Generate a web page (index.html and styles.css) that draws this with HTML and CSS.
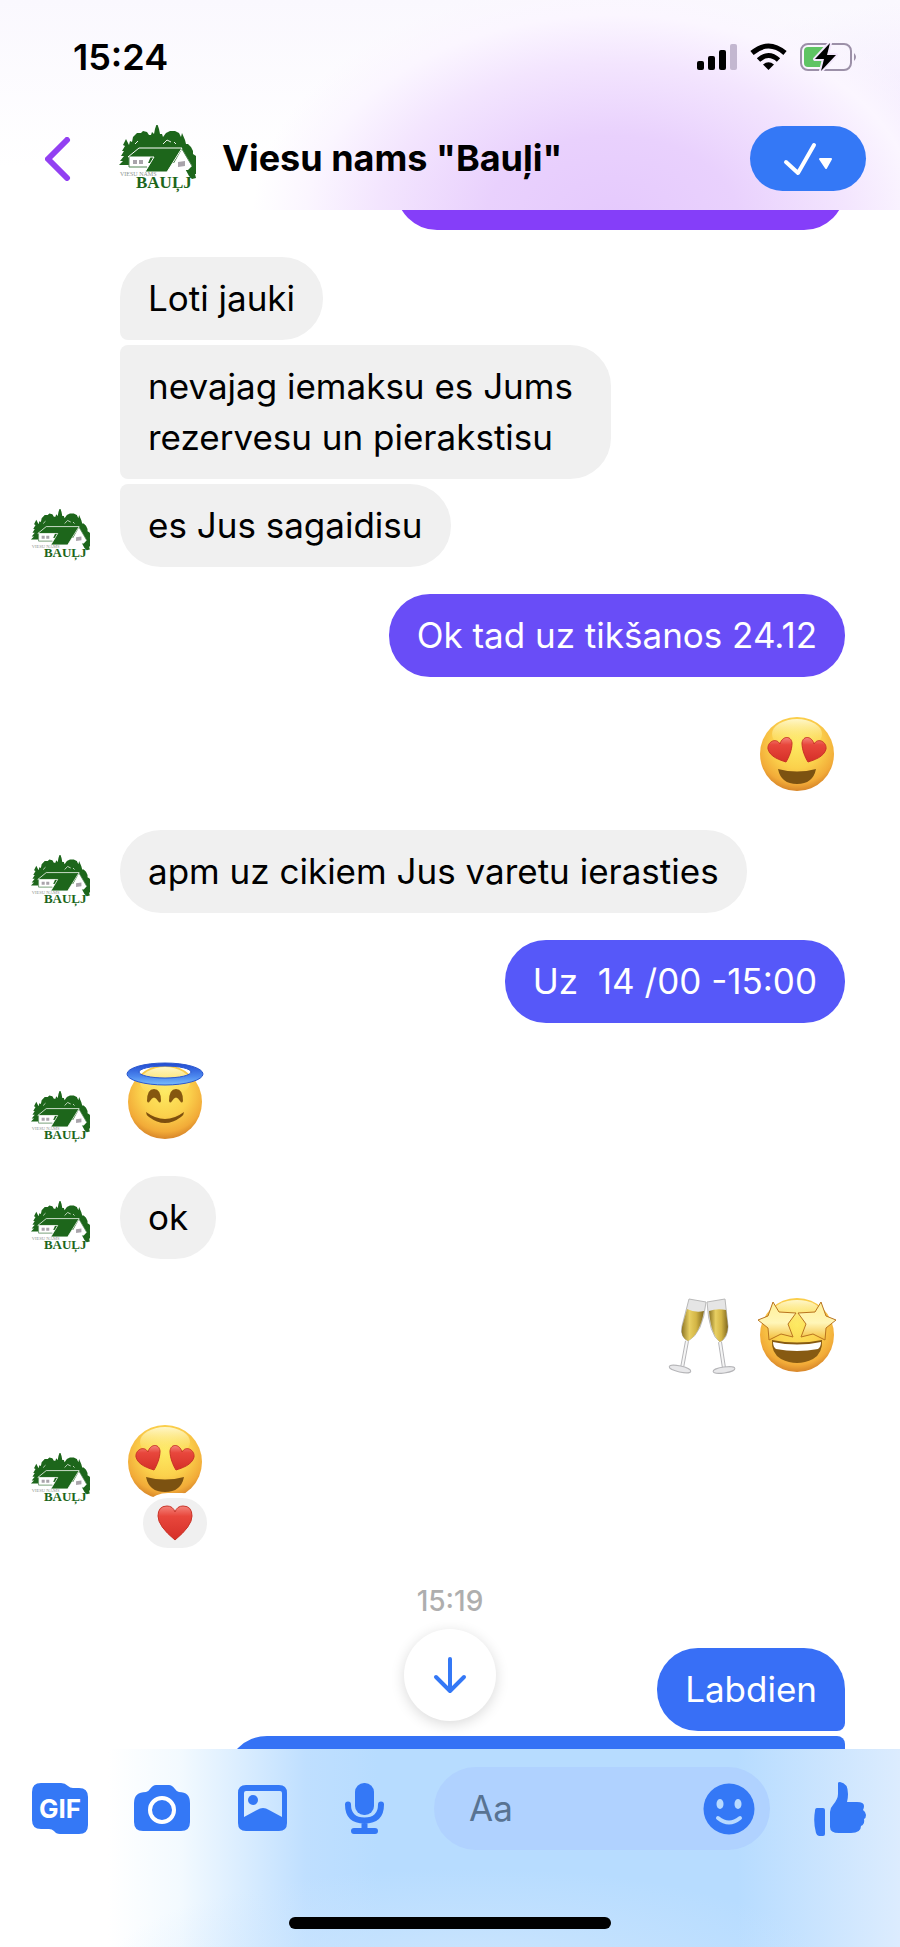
FILE: index.html
```html
<!DOCTYPE html>
<html lang="lv">
<head>
  <meta charset="UTF-8" />
  <meta name="viewport" content="width=device-width, initial-scale=1.0"/>
  <title>Viesu nams "Bauļi"</title>
  <link rel="stylesheet" href="styles.css">
</head>
<body>
  <!-- shared drawings -->
  <svg class="defs" width="0" height="0" aria-hidden="true">
    <defs>
      <radialGradient id="face" cx="50%" cy="36%" r="66%">
        <stop offset="0" stop-color="#fdea62"/>
        <stop offset="0.5" stop-color="#fbd14c"/>
        <stop offset="0.82" stop-color="#f2ab38"/>
        <stop offset="1" stop-color="#d27e26"/>
      </radialGradient>
      <linearGradient id="shine" x1="0" y1="0" x2="0" y2="1">
        <stop offset="0" stop-color="#fffbd8" stop-opacity="0.9"/>
        <stop offset="1" stop-color="#fde95f" stop-opacity="0"/>
      </linearGradient>
      <linearGradient id="heart" x1="0" y1="0" x2="0" y2="1">
        <stop offset="0" stop-color="#f4847b"/>
        <stop offset="0.3" stop-color="#e8473c"/>
        <stop offset="1" stop-color="#d52f28"/>
      </linearGradient>
      <linearGradient id="halo" x1="0" y1="0" x2="0" y2="1">
        <stop offset="0" stop-color="#2149d0"/>
        <stop offset="0.6" stop-color="#4b86ee"/>
        <stop offset="1" stop-color="#78bdfb"/>
      </linearGradient>
      <linearGradient id="star" x1="0" y1="0" x2="0" y2="1">
        <stop offset="0" stop-color="#fff09a"/>
        <stop offset="0.55" stop-color="#fff6b8"/>
        <stop offset="1" stop-color="#f3bd38"/>
      </linearGradient>
      <linearGradient id="wine" x1="0" y1="0" x2="1" y2="0">
        <stop offset="0" stop-color="#8d7524"/>
        <stop offset="0.35" stop-color="#e8cf62"/>
        <stop offset="0.65" stop-color="#d3b545"/>
        <stop offset="1" stop-color="#80681f"/>
      </linearGradient>
    </defs>

    <symbol id="logo" viewBox="0 0 78 68">
      <path fill="#1d661b" d="M1 40l4-4-3 0 4-5-3 0 3-5-2 0 3-5-2-1 3-6 3 6 1-4 2 1 1-5 4-4 4 0 2-2 4 1 2 3 2 0 1-3 2 2 1-5 2-6 2 6 1 5 2 0 1 3 3-4 4-2 5 0 4 2 2 4 1-4 3 7 1 4 2 0 3 3 2 4 0 3 3 2 1 4-1 3 2 4-2 3 2 4-3 0 1 4-4 1-3-3-7-13H23L11 32v8z"/>
      <path fill="none" stroke="#eef4ec" stroke-width="1" d="M17 19l3-3M45 19l4-4 4 2M56 17l2 2"/>
      <path fill="#fff" d="M11 31h22l-5 12H11z"/>
      <path fill="#1d661b" stroke="#fff" d="M21 23h43L49 47H27l9-15H10z"/>
      <path fill="#fff" d="M64 24l10 17-4 4H52z"/>
      <path fill="none" stroke="#4f8350" stroke-width="1" d="M11 32v10h18M64 24l10 17"/>
      <path fill="#a9a4ab" d="M15 35h4v4h-4zM21 35h4v4h-4zM60 37l7-1v5l-7 1z"/>
      <text class="logo-small" x="2" y="51">VIESU NAMS</text>
      <text class="logo-big" x="18" y="63">BAUĻJ</text>
    </symbol>

    <symbol id="love" viewBox="0 0 80 80">
      <g transform="translate(3 3)">
        <circle cx="37" cy="37" r="37" fill="url(#face)"/>
        <ellipse cx="37" cy="17" rx="25" ry="15" fill="url(#shine)"/>
        <path id="eye" fill="url(#heart)" stroke="#c93226" stroke-width="1" d="M26 45C20 43 10 40 8 32C7 25 16 20 20 27C22 19 31 18 32 26C32 33 29 40 26 45Z"/>
        <use href="#eye" transform="matrix(-1 0 0 1 74 0)"/>
        <path fill="#7c5211" d="M18 52q19 5 38 0q-3 15-19 15t-19-15z"/>
      </g>
    </symbol>

    <symbol id="angel" viewBox="0 0 80 80">
      <g transform="translate(2 3)">
        <circle cx="38" cy="39" r="37" fill="url(#face)"/>
        <ellipse cx="38" cy="19" rx="25" ry="15" fill="url(#shine)"/>
        <path fill="url(#halo)" stroke="#2a57cf" stroke-width="1" fill-rule="evenodd" d="M0 11a38 11 0 1 0 76 0a38 11 0 1 0-76 0zM12 9a26 6 0 1 0 52 0a26 6 0 1 0-52 0z"/>
        <path fill="#855710" d="M20 38q0-12 7-12t7 12q-1 3-3 0q-4-7-8 0q-2 3-3 0zM42 38q0-12 7-12t7 12q-1 3-3 0q-4-7-8 0q-2 3-3 0z"/>
        <path fill="#7d4f0e" d="M19 49q19 14 38 0q0 3-3 5q-16 12-32 0q-3-2-3-5z"/>
      </g>
    </symbol>

    <symbol id="starry" viewBox="0 0 80 80">
      <g transform="translate(0 2)">
        <circle cx="40" cy="37" r="37" fill="url(#face)"/>
        <ellipse cx="40" cy="16" rx="25" ry="14" fill="url(#shine)"/>
        <path fill="#875a12" d="M15 42q25 5 50 0q1 13-9 19q-16 8-32 0q-10-6-9-19z"/>
        <path fill="#fff" d="M16 44q24 5 48 0q0 5-3 7q-21 4-42 0q-3-2-3-7z"/>
        <path id="shape" fill="url(#star)" stroke="#b9741f" stroke-width="1" stroke-linejoin="round" d="M16 4L22 14L39 15L31 26L36 39L24 36L12 42L11 30L1 22L11 18Z"/>
        <use href="#shape" transform="matrix(-1 0 0 1 80 0)"/>
      </g>
    </symbol>

    <symbol id="glasses" viewBox="0 0 80 80">
      <g transform="translate(6 2)">
        <path fill="#e5e5e5" stroke="#b9b9b9" stroke-width="1" d="M20 1L37 4Q34 35 19 43Q11 39 13 28Z"/>
        <path fill="url(#wine)" d="M18 11Q26 15 35 13Q31 36 19 43Q11 39 13 29Z"/>
        <path fill="#e5e5e5" stroke="#b9b9b9" stroke-width="1" d="M38 4L56 1L59 28Q59 40 51 44Q40 37 38 4Z"/>
        <path fill="url(#wine)" d="M40 13Q48 10 57 12L59 29Q58 40 51 44Q42 37 40 13Z"/>
        <path fill="none" stroke="#b5b5b8" stroke-width="4" d="M18 43L13 70M51 44L55 70"/>
        <path fill="none" stroke="#f5f5f5" stroke-width="2" d="M18 43L13 70M51 44L55 70"/>
        <ellipse cx="11" cy="71" rx="11" ry="3" fill="#e8e8ea" stroke="#b5b5b8" transform="rotate(12 11 71)"/>
        <ellipse cx="55" cy="72" rx="11" ry="3" fill="#e8e8ea" stroke="#b5b5b8" transform="rotate(-8 55 72)"/>
      </g>
    </symbol>
  </svg>

  <header class="header">
    <div class="status">
      <span class="time">15:24</span>
      <div class="status-icons">
        <svg width="40" height="28" viewBox="0 0 40 28">
          <rect x="0" y="18" width="7" height="9" rx="2"/>
          <rect x="11" y="13" width="7" height="14" rx="2"/>
          <rect x="22" y="7" width="7" height="20" rx="2"/>
          <rect x="33" y="1" width="7" height="26" rx="2" fill="#c3b7d0"/>
        </svg>
        <svg width="37" height="28" viewBox="0 0 37 28">
          <path fill="none" stroke="#000" stroke-width="5" d="M2 10Q18.500-4 35 10M8.500 17Q18.500 8 28.500 17"/>
          <path d="M13 21.500q5.500-4.500 11 0L18.500 27z"/>
        </svg>
        <svg width="58" height="28" viewBox="0 0 58 28">
          <rect x="1" y="1" width="50" height="26" rx="7" fill="none" stroke="#9c90a8" stroke-width="2"/>
          <path fill="#9c90a8" d="M54 10q4 4 0 8z"/>
          <rect x="4" y="4" width="22" height="20" rx="4" fill="#5fc463"/>
          <path fill="#000" stroke="#f3e8fc" stroke-width="4" paint-order="stroke" stroke-linejoin="round" d="M30 0L15 16h9l-3 12L36 12h-9z"/>
        </svg>
      </div>
    </div>
    <div class="chat-bar">
      <button class="back" aria-label="Atpakaļ">
        <svg width="26" height="44" viewBox="0 0 26 44"><path fill="none" stroke="#9240f2" stroke-width="6" stroke-linecap="round" stroke-linejoin="round" d="M22 3L3 22l19 19"/></svg>
      </button>
      <svg class="logo" role="img" aria-label="Bauļi"><use href="#logo"/></svg>
      <h1>Viesu nams "Bauļi"</h1>
      <button class="done" aria-label="Atzīmēt kā pabeigtu">
        <svg width="50" height="34" viewBox="0 0 50 34">
          <path fill="none" stroke="#fff" stroke-width="4" stroke-linecap="round" stroke-linejoin="round" d="M3 20l12 11L31 3"/>
          <path fill="#fff" stroke="#fff" stroke-width="2" stroke-linejoin="round" d="M37 17h11l-5 9z"/>
        </svg>
      </button>
    </div>
  </header>

  <main class="chat">
    <div class="bubble mine cut-top"></div>

    <div class="group">
      <div class="bubble first">Loti jauki</div>
      <div class="bubble middle">nevajag iemaksu es Jums<br>rezervesu un pierakstisu</div>
      <div class="row">
        <svg class="avatar"><use href="#logo"/></svg>
        <div class="bubble last">es Jus sagaidisu</div>
      </div>
    </div>

    <div class="bubble mine violet">Ok tad uz tikšanos 24.12</div>

    <div class="emojis right">
      <svg class="emoji" role="img" aria-label="Sirds acis"><use href="#love"/></svg>
    </div>

    <div class="row">
      <svg class="avatar"><use href="#logo"/></svg>
      <div class="bubble">apm uz cikiem Jus varetu ierasties</div>
    </div>

    <div class="bubble mine indigo">Uz&nbsp; 14 /00 -15:00</div>

    <div class="row">
      <svg class="avatar"><use href="#logo"/></svg>
      <div class="emojis">
        <svg class="emoji" role="img" aria-label="Eņģelis"><use href="#angel"/></svg>
      </div>
    </div>

    <div class="row">
      <svg class="avatar"><use href="#logo"/></svg>
      <div class="bubble">ok</div>
    </div>

    <div class="emojis right">
      <svg class="emoji" role="img" aria-label="Glāzes"><use href="#glasses"/></svg>
      <svg class="emoji" role="img" aria-label="Zvaigžņu acis"><use href="#starry"/></svg>
    </div>

    <div class="row">
      <svg class="avatar"><use href="#logo"/></svg>
      <div class="emojis">
        <svg class="emoji" role="img" aria-label="Sirds acis"><use href="#love"/></svg>
        <span class="reaction">
          <svg width="36" height="36" viewBox="0 0 36 36"><path fill="url(#heart)" stroke="#c93226" stroke-width="1" d="M18 35Q1 21 1 11Q1 1 10 1Q16 1 18 7Q20 1 26 1Q35 1 35 11Q35 21 18 35Z"/></svg>
        </span>
      </div>
    </div>

    <div class="stamp">15:19</div>

    <div class="group">
      <div class="bubble mine blue">Labdien</div>
      <div class="bubble mine cut-bottom"></div>
    </div>

    <button class="scroll-down" aria-label="Uz leju">
      <svg width="34" height="38" viewBox="0 0 34 38"><path fill="none" stroke="#3478f6" stroke-width="4" stroke-linecap="round" stroke-linejoin="round" d="M17 3v31M3 21l14 14 14-14"/></svg>
    </button>
  </main>

  <footer class="footer">
    <form class="composer">
      <div class="tools">
        <button type="button" aria-label="GIF">
          <svg width="56" height="52" viewBox="0 0 56 52">
            <path fill="#3478f6" d="M9 0h20q4 0 7 3 2 2 5 2h6q9 0 9 9v28q0 9-9 9H28q-4 0-6-3-2-2-5-2H9q-9 0-9-9V9q0-9 9-9z"/>
            <text class="gif" x="28" y="35">GIF</text>
          </svg>
        </button>
        <button type="button" aria-label="Kamera">
          <svg width="56" height="52" viewBox="0 0 56 52">
            <path fill="#3478f6" d="M12 9q2 0 4-3 3-4 6-4h13q3 0 6 4 2 3 4 3 11 0 11 11v19q0 9-9 9H9q-9 0-9-9V20Q0 9 12 9z"/>
            <circle cx="28" cy="27" r="12" fill="none" stroke="#fff" stroke-width="4"/>
          </svg>
        </button>
        <button type="button" aria-label="Attēls">
          <svg width="56" height="52" viewBox="0 0 56 52">
            <path fill="#3478f6" fill-rule="evenodd" d="M10 2h33q8 0 8 8v30q0 8-8 8H10q-8 0-8-8V10q0-8 8-8zM10 8q-2 0-2 2v24l13-7q6-4 12 0l13 7V10q0-2-2-2z"/>
            <circle cx="17" cy="17" r="5" fill="#3478f6"/>
          </svg>
        </button>
        <button type="button" aria-label="Balss ziņa">
          <svg width="56" height="52" viewBox="0 0 56 52">
            <rect x="17" y="0" width="19" height="32" rx="9" fill="#3478f6"/>
            <path fill="none" stroke="#3478f6" stroke-width="6" stroke-linecap="round" d="M10 21.500q0 16 16.500 16t16.500-16M26.500 38v10M16 48h21"/>
          </svg>
        </button>
      </div>
      <div class="field">
        <input type="text" placeholder="Aa" aria-label="Ziņa">
        <button type="button" aria-label="Emocijzīmes">
          <svg width="52" height="52" viewBox="0 0 52 52">
            <circle cx="26" cy="26" r="25.500" fill="#3478f6"/>
            <ellipse cx="17" cy="21" rx="3.500" ry="5" fill="#b8daff"/>
            <ellipse cx="35" cy="21" rx="3.500" ry="5" fill="#b8daff"/>
            <path fill="none" stroke="#b8daff" stroke-width="4" stroke-linecap="round" d="M15 35q11 9 22 0"/>
          </svg>
        </button>
      </div>
      <button type="button" class="like" aria-label="Patīk">
        <svg width="52" height="54" viewBox="0 0 52 54">
          <path fill="#3478f6" d="M3 26h6q2 0 2 2v24q0 2-2 2H5q-2 0-3-3Q-1 40 1 29q0-3 2-3zM24 1q0-1 2-1 8 1 8 12 0 4-1 8h10q7 0 7 4 0 2-1 4 3 2 3 5t-2 4q1 5-3 7 0 7-10 7H25q-9 0-9-6V30q0-4 3-7 5-6 5-11z"/>
        </svg>
      </button>
    </form>
    <div class="home-bar"></div>
  </footer>
</body>
</html>
```

FILE: styles.css
```css
* { margin: 0; padding: 0; box-sizing: border-box; }
body { display: flex; flex-direction: column; min-height: 100vh; background: #fff; color: #000; font-family: Inter, "Liberation Sans", sans-serif; font-size: 35px; line-height: 51px; }
button { background: none; border: none; cursor: pointer; line-height: 0; }
svg { display: block; flex-shrink: 0; }
.defs { position: absolute; }
.logo-small { font-family: "Liberation Serif", serif; font-size: 6px; line-height: 6px; fill: #8e9490; }
.logo-big { font-family: "Liberation Serif", serif; font-size: 17px; line-height: 17px; font-weight: bold; fill: #1d661b; }

/* header */
.header { height: 210px; background: radial-gradient(ellipse 40% 115% at 68% 105%, #e5c9fd 0%, #e9d1fd 35%, #f3e5fe 65%, #fbf6ff 85%, rgba(253, 250, 255, 0) 100%), radial-gradient(ellipse 40% 100% at 105% 100%, #ecdcfe, rgba(255, 255, 255, 0)), linear-gradient(to bottom, #faf8fe, #fff 80%); }
.status { display: flex; justify-content: space-between; align-items: center; height: 114px; padding: 0 42px 0 73px; }
.time { font-size: 36px; font-weight: 600; }
.status-icons { display: flex; gap: 13px; }
.chat-bar { display: flex; align-items: center; height: 89px; padding: 0 34px 0 45px; }
.back { width: 26px; margin-right: 47px; }
.logo { width: 78px; height: 68px; margin-right: 26px; }
h1 { flex: 1; font-size: 36px; font-weight: 700; }
.done { display: flex; justify-content: center; align-items: center; width: 116px; height: 65px; border-radius: 33px; background: #3478f6; }

/* messages */
.chat { position: relative; flex: 1; display: flex; flex-direction: column; align-items: flex-start; gap: 27px; padding: 0 55px 0 30px; overflow: hidden; }
.group { display: flex; flex-direction: column; align-items: flex-start; gap: 5px; width: 100%; }
.group > .bubble { margin-left: 90px; }
.row { display: flex; align-items: flex-end; gap: 30px; }
.avatar { width: 60px; height: 52px; margin-bottom: 6px; }
.bubble { padding: 16px 28px; border-radius: 41px; background: #f0f0f0; }
.first { border-bottom-left-radius: 8px; }
.middle { border-top-left-radius: 8px; border-bottom-left-radius: 8px; padding-right: 38px; }
.last { border-top-left-radius: 8px; }
.chat .mine { align-self: flex-end; color: #fff; }
.chat .violet { background: #694df7; }
.chat .indigo { background: #5658f9; }
.chat .blue { background: #386ff6; border-bottom-right-radius: 8px; }
.chat .cut-top { width: 449px; height: 83px; margin-top: -63px; background: #853ef9; }
.chat .cut-bottom { width: 619px; height: 83px; margin-bottom: -70px; border-top-right-radius: 8px; background: #3572f5; }
.emojis { position: relative; display: flex; align-items: center; gap: 14px; height: 99px; padding: 0 8px 0 5px; }
.right { align-self: flex-end; }
.emoji { width: 80px; height: 80px; }
.reaction { position: absolute; left: 18px; bottom: -42px; display: flex; justify-content: center; align-items: center; width: 74px; height: 60px; border: 5px solid #fff; border-radius: 30px; background: #f0f0f0; }
.stamp { align-self: stretch; margin: 46px 0 3px 25px; color: #aeaeae; font-size: 28px; font-weight: 500; line-height: 34px; text-align: center; }
.scroll-down { position: absolute; left: 50%; bottom: 28px; display: flex; justify-content: center; align-items: center; width: 92px; height: 92px; margin-left: -46px; border-radius: 50%; background: #fff; box-shadow: 0 3px 14px rgba(0, 0, 0, 0.15); }

/* composer */
.footer { padding: 18px 0; background: radial-gradient(ellipse 40% 50% at 52% 110%, rgba(208, 231, 253, 0.8), rgba(208, 231, 253, 0)), linear-gradient(to right, #fff 12%, #f3faff 20%, #d6ebff 28%, #bfdfff 34%, #b7dcff 42%, #b7dcff 82%, #dcecfe 100%); }
.composer { display: flex; align-items: center; padding: 0 34px 0 32px; }
.tools { display: flex; gap: 46px; margin-right: 40px; }
.gif { font-family: Inter, sans-serif; font-size: 26px; font-weight: 700; fill: #fff; text-anchor: middle; }
.field { flex: 1; display: flex; align-items: center; min-width: 0; height: 83px; margin-right: 44px; padding: 0 15px 0 35px; border-radius: 42px; background: #b0d2ff; }
.field input { flex: 1; min-width: 0; border: none; outline: none; background: none; font: inherit; color: #000; }
.field input::placeholder { color: #587392; opacity: 1; }
.home-bar { width: 322px; height: 12px; margin: 67px auto 0; border-radius: 6px; background: #000; }
```
